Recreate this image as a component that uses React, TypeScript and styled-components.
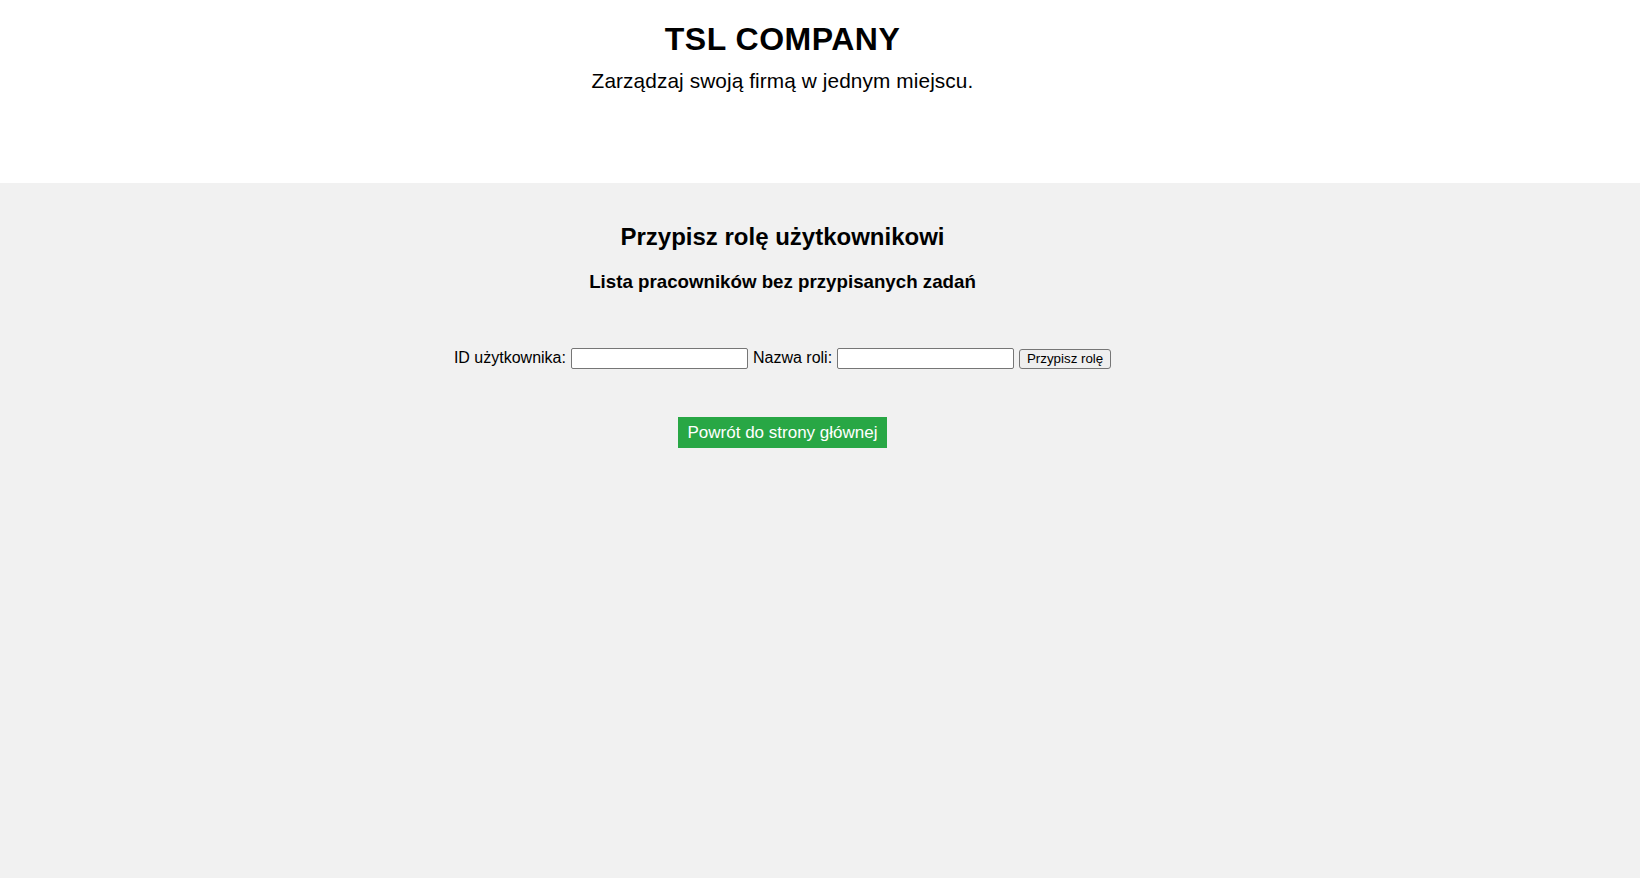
import React from "react";
import styled, { createGlobalStyle } from "styled-components";

const GlobalStyle = createGlobalStyle`
  html, body {
    margin: 0;
    padding: 0;
    background: #ffffff;
    font-family: "Liberation Sans", Arial, sans-serif;
    color: #000;
  }
  * { box-sizing: border-box; }
`;

const Page = styled.div`
  min-height: 100vh;
  display: flex;
  flex-direction: column;
`;

const Header = styled.header`
  height: 183px;
  padding: 21px 75px 0 0;
  background: #ffffff;
  text-align: center;
`;

const Title = styled.h1`
  margin: 0 0 11px;
  font-size: 32px;
  font-weight: bold;
  line-height: 37px;
  letter-spacing: 0.5px;
`;

const Tagline = styled.p`
  margin: 0;
  font-size: 20.8px;
  line-height: 24px;
  letter-spacing: 0.1px;
`;

const Main = styled.main`
  flex: 1;
  background: #f1f1f1;
  padding: 40px 75px 0 0;
  text-align: center;
`;

const Heading = styled.h2`
  margin: 0;
  font-size: 24px;
  line-height: 27.6px;
  font-weight: bold;
`;

const SubHeading = styled.h3`
  margin: 20px 0 0;
  font-size: 18.72px;
  line-height: 21.5px;
  font-weight: bold;
`;

const Form = styled.form`
  margin-top: 56px;
  display: flex;
  justify-content: center;
  align-items: center;
  gap: 5px;
`;

const Label = styled.label`
  font-size: 16px;
  line-height: 18px;
  padding-bottom: 2px;
`;

const Input = styled.input`
  width: 177px;
  height: 21px;
  padding: 1px 2px;
  border: 1px solid #767676;
  border-radius: 2px;
  background: #fff;
  font-family: "Liberation Sans", Arial, sans-serif;
  font-size: 13.33px;
`;

const SubmitButton = styled.button`
  width: 92px;
  height: 20px;
  padding: 0 6px;
  border: 1px solid #767676;
  border-radius: 3px;
  background: #efefef;
  font-family: "Liberation Sans", Arial, sans-serif;
  font-size: 13.33px;
  line-height: 18px;
  color: #000;
`;

const BackLink = styled.a`
  display: inline-block;
  margin-top: 48px;
  height: 31px;
  padding: 0 10px;
  background: #28a745;
  color: #fff;
  font-size: 17px;
  line-height: 31px;
  text-decoration: none;
`;

export default function App() {
  return (
    <>
      <GlobalStyle />
      <Page>
        <Header>
          <Title>TSL COMPANY</Title>
          <Tagline>Zarządzaj swoją firmą w jednym miejscu.</Tagline>
        </Header>
        <Main>
          <Heading>Przypisz rolę użytkownikowi</Heading>
          <SubHeading>Lista pracowników bez przypisanych zadań</SubHeading>
          <Form onSubmit={(e) => e.preventDefault()}>
            <Label htmlFor="userId">ID użytkownika:</Label>
            <Input id="userId" type="text" />
            <Label htmlFor="roleName">Nazwa roli:</Label>
            <Input id="roleName" type="text" />
            <SubmitButton type="submit">Przypisz rolę</SubmitButton>
          </Form>
          <BackLink href="#">Powrót do strony głównej</BackLink>
        </Main>
      </Page>
    </>
  );
}
